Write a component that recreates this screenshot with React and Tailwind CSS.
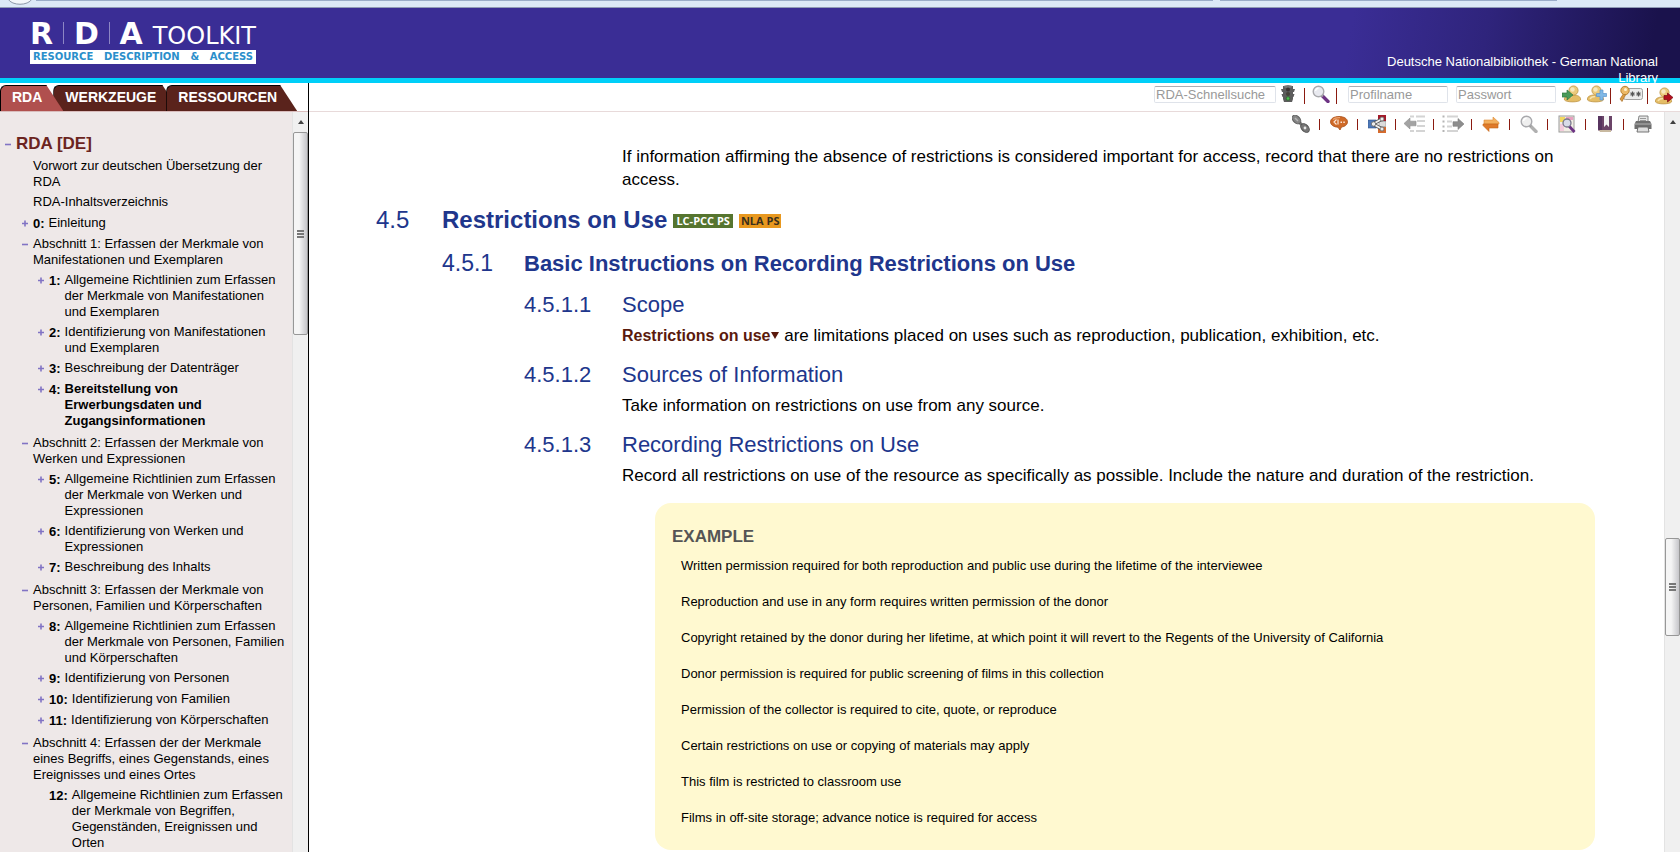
import { useState } from 'react';
import { clsx } from 'clsx';

const tabs = ['RDA', 'WERKZEUGE', 'RESSOURCEN'];

const tree = [
  { label: 'Vorwort zur deutschen Übersetzung der RDA' },
  { label: 'RDA-Inhaltsverzeichnis' },
  { number: '0:', label: 'Einleitung', sign: '+' },
  {
    label: 'Abschnitt 1: Erfassen der Merkmale von Manifestationen und Exemplaren',
    sign: '-',
    chapters: [
      { number: '1:', label: 'Allgemeine Richtlinien zum Erfassen der Merkmale von Manifestationen und Exemplaren', sign: '+' },
      { number: '2:', label: 'Identifizierung von Manifestationen und Exemplaren', sign: '+' },
      { number: '3:', label: 'Beschreibung der Datenträger', sign: '+' },
      { number: '4:', label: 'Bereitstellung von Erwerbungsdaten und Zugangsinformationen', sign: '+', active: true },
    ],
  },
  {
    label: 'Abschnitt 2: Erfassen der Merkmale von Werken und Expressionen',
    sign: '-',
    chapters: [
      { number: '5:', label: 'Allgemeine Richtlinien zum Erfassen der Merkmale von Werken und Expressionen', sign: '+' },
      { number: '6:', label: 'Identifizierung von Werken und Expressionen', sign: '+' },
      { number: '7:', label: 'Beschreibung des Inhalts', sign: '+' },
    ],
  },
  {
    label: 'Abschnitt 3: Erfassen der Merkmale von Personen, Familien und Körperschaften',
    sign: '-',
    chapters: [
      { number: '8:', label: 'Allgemeine Richtlinien zum Erfassen der Merkmale von Personen, Familien und Körperschaften', sign: '+' },
      { number: '9:', label: 'Identifizierung von Personen', sign: '+' },
      { number: '10:', label: 'Identifizierung von Familien', sign: '+' },
      { number: '11:', label: 'Identifizierung von Körperschaften', sign: '+' },
    ],
  },
  {
    label: 'Abschnitt 4: Erfassen der der Merkmale eines Begriffs, eines Gegenstands, eines Ereignisses und eines Ortes',
    sign: '-',
    chapters: [
      { number: '12:', label: 'Allgemeine Richtlinien zum Erfassen der Merkmale von Begriffen, Gegenständen, Ereignissen und Orten' },
    ],
  },
];

const examples = [
  'Written permission required for both reproduction and public use during the lifetime of the interviewee',
  'Reproduction and use in any form requires written permission of the donor',
  'Copyright retained by the donor during her lifetime, at which point it will revert to the Regents of the University of California',
  'Donor permission is required for public screening of films in this collection',
  'Permission of the collector is required to cite, quote, or reproduce',
  'Certain restrictions on use or copying of materials may apply',
  'This film is restricted to classroom use',
  'Films in off-site storage; advance notice is required for access',
];

/* Icons */

const Svg = ({ w = 18, h = 18, children }) => (
  <svg width={w} height={h} viewBox={`0 0 ${w} ${h}`} className="block shrink-0" aria-hidden="true">
    {children}
  </svg>
);

const TrafficLightIcon = () => (
  <Svg w={14}>
    <path d="M2 1h10v3h2l-1 3h-1v2h1.500l-1 3h-.5v2l-1 3H3l-1-3v-2h-.5l-1-3H2V7H1L0 4h2z" fill="#5d5d5d" />
    <ellipse cx="7" cy="1.500" rx="4" ry="1.500" fill="#777" />
    <circle cx="7" cy="4.500" r="2" fill="#3c3434" />
    <circle cx="7" cy="9" r="2" fill="#45423a" />
    <circle cx="7" cy="13.500" r="2.300" fill="#3a6b3a" />
    <circle cx="7" cy="13.500" r="1.300" fill="#46c04a" />
  </Svg>
);

const MagnifierIcon = ({ handle = '#6d3384', lens = '#e9eaf0' }) => (
  <Svg>
    <path d="M9.500 10l6.500 6.500" stroke={handle} strokeWidth="3.400" strokeLinecap="round" />
    <path d="M9 9.500l2 2" stroke="#999" strokeWidth="2" />
    <circle cx="6.500" cy="6.500" r="5.300" fill={lens} stroke="#a9a9ad" strokeWidth="1.400" />
    <path d="M3.500 6a3.200 3.200 0 0 1 3-2.700" stroke="#fff" strokeWidth="1.500" fill="none" />
  </Svg>
);

const Person = () => (
  <>
    <path d="M2.500 15c-.8-3 2-4.500 5.500-5h5c4 .5 6 2.500 5.500 5-2 2.500-14 2.500-16 0z" fill="#e4bd66" stroke="#bf9648" strokeWidth=".8" />
    <path d="M5 14c1-2 3-2.500 5-2.500" stroke="#f8e4ae" strokeWidth="1.500" fill="none" />
    <circle cx="11.500" cy="5.500" r="4.600" fill="#ebca7c" stroke="#bf9648" strokeWidth=".8" />
    <circle cx="10.500" cy="4.500" r="2.200" fill="#f8e8bd" />
  </>
);

const LoginIcon = () => (
  <Svg w={20}>
    <Person />
    <path d="M0 8h5V5l6 5-6 5v-3H0z" fill="#4a9a5a" stroke="#2f7a3e" strokeWidth=".7" />
  </Svg>
);

const AddProfileIcon = () => (
  <Svg w={20}>
    <g transform="translate(-2 0)"><Person /></g>
    <path d="M13 5h3v3.500h3.500v3H16V15h-3v-3.500H9.500v-3H13z" fill="#7fb8e6" stroke="#5b96cf" strokeWidth=".7" />
  </Svg>
);

const LogoutIcon = () => (
  <Svg>
    <g transform="translate(-2 0)"><Person /></g>
    <path d="M9 8.500h3.500V6L18 10.500 12.500 15v-2.500H9z" fill="#b3101f" stroke="#7b0712" strokeWidth=".7" />
  </Svg>
);

const PasswordIcon = () => (
  <Svg w={26}>
    <rect x="5.500" y="3.500" width="19" height="11" rx="2" fill="#ececec" stroke="#a2a2a2" />
    <path d="M14.500 6.500v5M12.500 7.800l4 2.400M16.500 7.800l-4 2.400M20.500 6.500v5M18.500 7.800l4 2.400M22.500 7.800l-4 2.400" stroke="#555" strokeWidth="1.200" />
    <path d="M6 8l-4 6 2 2.500 4-7.500z" fill="#dc9c43" stroke="#a86c22" strokeWidth=".7" />
    <circle cx="7" cy="5.500" r="4.200" fill="#ecb866" stroke="#b17929" strokeWidth=".9" />
    <circle cx="7.500" cy="4.500" r="1.500" fill="#fff2cf" />
  </Svg>
);

const LinkIcon = () => (
  <Svg>
    <path d="M5 5l8 8" stroke="#777" strokeWidth="3" />
    <ellipse cx="4.500" cy="4.500" rx="5" ry="3.400" transform="rotate(45 4.500 4.500)" fill="#858585" stroke="#5f5f5f" />
    <ellipse cx="13" cy="13" rx="5" ry="3.400" transform="rotate(45 13 13)" fill="#777" stroke="#555" />
    <path d="M3 3l3 3" stroke="#b5b5b5" strokeWidth="1.500" />
    <circle cx="13" cy="13" r="1.400" fill="#e8e8e8" />
  </Svg>
);

const CommentIcon = () => (
  <Svg>
    <path d="M9 1.500c5 0 8.500 2.200 8.500 5.300 0 3-2.700 4.800-6 5.200L10 15l-2-2.800C3.500 12 .5 9.800.5 6.800.5 3.700 4 1.500 9 1.500z" fill="#cf6a28" stroke="#a84b14" strokeWidth=".8" />
    <path d="M3 4.500C4.500 3 7 2.500 10 2.700" stroke="#eba36e" strokeWidth="1.200" fill="none" />
    <path d="M6.500 4.500L4 7l2.500 2.500M8 4.500v5" stroke="#fbe6d8" strokeWidth="1.200" fill="none" />
    <path d="M10.500 6.500h1.500v1.500h-1.500zM13.300 6.500h1.500v1.500h-1.500z" fill="#fbe6d8" />
  </Svg>
);

const TreeIcon = () => (
  <Svg>
    <rect x="0" y="5" width="8" height="8" fill="#4d78b8" stroke="#33558a" strokeWidth=".6" />
    <rect x="10" y="0" width="8" height="6" fill="#a31a2a" />
    <rect x="11" y="6.500" width="7" height="5" fill="#dcdcdc" stroke="#888" strokeWidth=".6" />
    <rect x="10" y="12" width="8" height="6" fill="#d56b2e" />
    <path d="M5 9l9-5M5 9l9 5" stroke="#555" strokeWidth="3.400" />
    <path d="M5 9l9-5M5 9l9 5" stroke="#f2f2f2" strokeWidth="2" />
    <circle cx="14" cy="4" r="2" fill="#eee" stroke="#666" strokeWidth=".8" />
    <circle cx="14" cy="14" r="2" fill="#eee" stroke="#666" strokeWidth=".8" />
    <circle cx="5.500" cy="9" r="2.200" fill="#eee" stroke="#666" strokeWidth=".8" />
  </Svg>
);

const OutdentIcon = () => (
  <Svg w={22}>
    <path d="M6 1.500h4M12 1.500h9M13 6h8M13 11h8M6 16h4M12 16h9" stroke="#d4d4d4" strokeWidth="2" />
    <path d="M0 8.500L6 3v3.200h6v4.600H6V14z" fill="#a3a3a3" stroke="#8f8f8f" strokeWidth=".6" />
  </Svg>
);

const IndentIcon = () => (
  <Svg w={22}>
    <path d="M5 1.500h11M5 6.500h5M5 11.500h5M5 16h11" stroke="#d4d4d4" strokeWidth="2" />
    <path d="M.5 1.500h2M.5 6.500h2M.5 11.500h2M.5 16h2" stroke="#b5b5b5" strokeWidth="2" />
    <path d="M22 9l-6-5.500v3.200h-5v4.600h5v3.200z" fill="#8d8d8d" stroke="#7d7d7d" strokeWidth=".6" />
  </Svg>
);

const SyncIcon = () => (
  <Svg>
    <path d="M2 5h9V2l6 5.500V9H2z" fill="#f2b05f" stroke="#dd8a35" strokeWidth=".6" />
    <path d="M16 13H7v3.500L1 10.500V9h15z" fill="#df7a2a" stroke="#c4661a" strokeWidth=".6" />
  </Svg>
);

const FindInPageIcon = () => (
  <Svg>
    <rect x="1" y="1" width="15" height="16" fill="#f1ede4" stroke="#9a9a9a" />
    <path d="M2 2h5v5H2z" fill="#f2d860" />
    <path d="M8 2h7v3H8z" fill="#e9a0c0" />
    <path d="M2 9h4v7H2z" fill="#f3cbdb" />
    <path d="M11 11l5.500 6" stroke="#6d3384" strokeWidth="2.800" />
    <circle cx="9" cy="8" r="4" fill="#d8dbe8" stroke="#77778a" strokeWidth="1.300" />
  </Svg>
);

const BookIcon = () => (
  <Svg w={16}>
    <path d="M1 1h14v14l-1 1H2l-1-1z" fill="#6b4468" />
    <path d="M1 1h4v14H2l-1-1z" fill="#57345f" />
    <path d="M2 15h12v2H3z" fill="#c8b9a0" />
    <path d="M7 1h5v11l-2.500-2.500L7 12z" fill="#f4f4f4" />
  </Svg>
);

const PrinterIcon = () => (
  <Svg>
    <path d="M5 1h9v6H4z" fill="#e6e6e6" stroke="#777" strokeWidth=".9" />
    <path d="M6 3.500h6M6 5.500h6" stroke="#999" />
    <path d="M2 6h14l1.500 3v5h-17V9z" fill="#6f6f6f" />
    <path d="M1 9h16" stroke="#b5b5b5" />
    <path d="M4 12h10l1 5H3z" fill="#dedede" stroke="#666" strokeWidth=".9" />
  </Svg>
);

const pageTools = [
  { name: 'Link', Icon: LinkIcon },
  { name: 'Kommentar', Icon: CommentIcon },
  { name: 'Baumansicht', Icon: TreeIcon },
  { name: 'Zurück', Icon: OutdentIcon },
  { name: 'Vor', Icon: IndentIcon },
  { name: 'Synchronisieren', Icon: SyncIcon },
  { name: 'Suchen', Icon: () => <MagnifierIcon handle="#b0b0b0" lens="#efefef" /> },
  { name: 'Im Dokument suchen', Icon: FindInPageIcon },
  { name: 'Lesezeichen', Icon: BookIcon },
  { name: 'Drucken', Icon: PrinterIcon },
];

const IconButton = ({ label, className, children }) => (
  <button type="button" aria-label={label} className={clsx('shrink-0 cursor-pointer', className)}>
    {children}
  </button>
);

const Divider = ({ className }) => <span className={clsx('w-px shrink-0 bg-[#8b1a10]', className)} />;

/* Scrollbar drawn beside a pane; before, thumb and after are flex shares of the track */
const Scrollbar = ({ before, thumb, after }) => (
  <div className="flex w-4 shrink-0 flex-col border-l border-[#e3e3e3] bg-[#f0f0f0]" aria-hidden="true">
    <div className="flex h-5 items-center justify-center">
      <span className="border-x-[3px] border-b-4 border-x-transparent border-b-[#404040]" />
    </div>
    <div className={before} />
    <div className={clsx('flex basis-0 flex-col items-center justify-center gap-px rounded-xs border border-[#979797] bg-linear-to-r from-[#f5f5f5] from-40% to-[#c6c6ca]', thumb)}>
      <span className="h-0.5 w-[7px] bg-[#777]" />
      <span className="h-0.5 w-[7px] bg-[#777]" />
      <span className="h-0.5 w-[7px] bg-[#777]" />
    </div>
    <div className={after} />
  </div>
);

const BrowserEdge = () => (
  <div className="flex h-2 shrink-0 items-start border-b border-[#8f9bb5] bg-[#dce9f7]">
    <svg width="32" height="6" viewBox="0 0 32 6" className="ml-1 shrink-0" aria-hidden="true">
      <path d="M4 -1C8 6 24 6 28 -1" fill="#f3f7fb" stroke="#8c97a8" />
    </svg>
    <span className="h-px grow-[1178] bg-[#9aacc8]" />
    <span className="w-[7px]" />
    <span className="h-px grow-[338] bg-[#9aacc8]" />
    <span className="grow-[123]" />
  </div>
);

const Logo = () => (
  <div className="ml-[30px] mt-[13px] w-[226px] font-['DejaVu_Sans',sans-serif] text-white">
    <div className="flex h-[26px] items-baseline justify-between leading-[26px]">
      <span className="text-[30px] font-bold">R</span>
      <span className="h-[22px] w-px bg-[#8d86c4]" />
      <span className="text-[30px] font-bold">D</span>
      <span className="h-[22px] w-px bg-[#8d86c4]" />
      <span className="text-[30px] font-bold">A</span>
      <span className="text-[24px]">TOOLKIT</span>
    </div>
    <div className="mt-[3px] flex h-[14px] justify-between bg-white px-[3px] text-[10px] leading-[14px] font-bold text-[#2a8fcb]">
      <span>RESOURCE</span>
      <span>DESCRIPTION</span>
      <span>&amp;</span>
      <span>ACCESS</span>
    </div>
  </div>
);

const Header = () => (
  <header className="flex h-[75px] shrink-0 justify-between bg-[linear-gradient(100deg,#3a2d95_80%,#2f247c_88%,#1a124c_98%)] shadow-[inset_0_-5px_0_#00cff8]">
    <Logo />
    <p className="mt-[46px] mr-[22px] w-[284px] shrink-0 text-right text-[13px] leading-4 text-white">
      Deutsche Nationalbibliothek - German National Library
    </p>
  </header>
);

const TabBar = ({ active, onSelect }) => (
  <nav className="flex h-[29px] shrink-0 items-end border-b border-[#d9bcbc]">
    {tabs.map((tab, index) => (
      <button
        key={tab}
        type="button"
        onClick={() => onSelect(tab)}
        className={clsx(
          'h-[26px] cursor-pointer rounded-tl-md border-t border-l border-black pb-[3px] pl-[11px] text-left text-[14px] leading-5 font-bold text-white [clip-path:polygon(0_0,calc(100%-17px)_0,100%_100%,0_100%)]',
          index === 0 && 'pr-[21px]',
          index === 1 && '-ml-[10px] pr-[23px]',
          index === 2 && '-ml-[13px] pr-5',
          tab === active ? 'z-10 bg-[#b0504e]' : 'bg-[#5a231c]',
        )}
      >
        {tab}
      </button>
    ))}
  </nav>
);

const Sign = ({ sign }) => (
  <span className="flex h-4 w-[11px] shrink-0 items-center" aria-hidden="true">
    {sign && (
      <svg width="7" height="7" viewBox="0 0 7 7">
        <path d={sign === '+' ? 'M0 3.500h6M3 .5v6' : 'M0 3.500h6'} stroke="#8173c4" strokeWidth="1.600" />
      </svg>
    )}
  </span>
);

const TreeRow = ({ item }) => (
  <a href="#" className={clsx('flex min-h-[17px] items-start', item.active && 'font-bold')}>
    <Sign sign={item.sign} />
    {item.number && <span className="mt-px mr-1 shrink-0 font-bold">{item.number}</span>}
    <span>{item.label}</span>
  </a>
);

const Sidebar = () => {
  const [activeTab, setActiveTab] = useState('RDA');

  return (
    <aside className="flex w-[309px] shrink-0 flex-col border-r border-black">
      <TabBar active={activeTab} onSelect={setActiveTab} />
      <div className="flex min-h-0 grow bg-[#eee8e8]">
        <div className="min-w-0 grow overflow-hidden pt-[22px] pr-[6px] pl-[5px] text-[13px] leading-4">
          <h2 className="flex items-center text-[17px] leading-5 font-bold text-[#6b2420]">
            <Sign sign="-" />
            RDA [DE]
          </h2>
          <ul className="mt-1 flex flex-col gap-1 pl-[17px]">
            {tree.map((item) => (
              <li key={item.label}>
                <TreeRow item={item} />
                {item.chapters && (
                  <ul className="mt-1 flex flex-col gap-1 pb-0.5 pl-4">
                    {item.chapters.map((chapter) => (
                      <li key={chapter.number}>
                        <TreeRow item={chapter} />
                      </li>
                    ))}
                  </ul>
                )}
              </li>
            ))}
          </ul>
        </div>
        <Scrollbar before="h-0" thumb="grow-[202]" after="grow-[518]" />
      </div>
    </aside>
  );
};

const Field = ({ label, type = 'text', className }) => (
  <input
    type={type}
    aria-label={label}
    placeholder={label}
    className={clsx('mt-px h-[17px] shrink-0 rounded-xs border border-[#dfe3ea] border-t-[#abadb3] bg-white px-px text-[13px] leading-4 placeholder:text-[#999]', className)}
  />
);

const SearchBar = () => (
  <form className="flex h-[29px] shrink-0 items-start justify-end border-b border-[#e8dada] pt-0.5 pr-[7px]">
    <Field label="RDA-Schnellsuche" className="w-[122px]" />
    <IconButton label="Suchfilter" className="ml-[5px]"><TrafficLightIcon /></IconButton>
    <Divider className="mt-[3px] ml-[9px] h-4" />
    <IconButton label="Erweiterte Suche" className="ml-[7px]"><MagnifierIcon /></IconButton>
    <Divider className="mt-[3px] ml-[6px] h-4" />
    <Field label="Profilname" className="ml-[11px] w-[100px]" />
    <Field label="Passwort" type="password" className="ml-2 w-[100px]" />
    <IconButton label="Anmelden" className="ml-[6px]"><LoginIcon /></IconButton>
    <IconButton label="Profil anlegen" className="ml-[5px]"><AddProfileIcon /></IconButton>
    <Divider className="mt-[3px] ml-[3px] h-4" />
    <IconButton label="Passwort vergessen" className="ml-[7px]"><PasswordIcon /></IconButton>
    <Divider className="mt-[3px] ml-[3px] h-4" />
    <IconButton label="Abmelden" className="mt-0.5 ml-[7px]"><LogoutIcon /></IconButton>
  </form>
);

const PageTools = () => (
  <div className="flex h-6 shrink-0 items-center justify-end pr-[3px]">
    {pageTools.map(({ name, Icon }, index) => (
      <div key={name} className="flex w-[38px] items-center">
        <Divider className={clsx('h-[11px]', index === 0 && 'invisible')} />
        <IconButton label={name} className="flex grow justify-center"><Icon /></IconButton>
      </div>
    ))}
  </div>
);

const Entry = ({ number, title, children }) => (
  <section className="pl-[148px]">
    <h4 className="flex text-[22px] leading-7">
      <span className="w-[98px] shrink-0">{number}</span>
      {title}
    </h4>
    <p className="mt-[5px] mb-[14px] pl-[98px] leading-[23px] text-black">{children}</p>
  </section>
);

const Article = () => (
  <article className="min-h-0 grow overflow-hidden pr-[69px] pl-[67px] text-[17px] text-[#20368c]">
    <p className="mt-[9px] pr-3 pl-[246px] leading-[23px] text-black">
      If information affirming the absence of restrictions is considered important for access, record that there are no restrictions on access.
    </p>
    <h2 className="mt-[13px] flex items-center text-[24px] leading-8">
      <span className="w-[66px] shrink-0">4.5</span>
      <span className="font-bold">Restrictions on Use</span>
      <a href="#" className="mt-0.5 ml-[6px] h-[14px] bg-[#56752f] px-[3px] font-['Open_Sans',sans-serif] text-[11px] leading-[14px] font-bold text-white">LC-PCC PS</a>
      <a href="#" className="mt-0.5 ml-[6px] h-[14px] bg-[#e8981f] px-0.5 font-['Open_Sans',sans-serif] text-[11px] leading-[14px] font-bold text-[#3a2f1c]">NLA PS</a>
    </h2>
    <h3 className="my-[11px] flex items-baseline pl-[66px] text-[23px] leading-8">
      <span className="w-[82px] shrink-0">4.5.1</span>
      <span className="text-[22px] font-bold">Basic Instructions on Recording Restrictions on Use</span>
    </h3>
    <Entry number="4.5.1.1" title="Scope">
      <a href="#" className="text-[16px] font-bold text-[#5a1a0c]">
        Restrictions on use
        <svg width="8" height="7" viewBox="0 0 8 7" className="mb-[3px] ml-px inline" aria-hidden="true">
          <path d="M0 0h8L4 7z" fill="currentColor" />
        </svg>
      </a>
      {' '}are limitations placed on uses such as reproduction, publication, exhibition, etc.
    </Entry>
    <Entry number="4.5.1.2" title="Sources of Information">
      Take information on restrictions on use from any source.
    </Entry>
    <Entry number="4.5.1.3" title="Recording Restrictions on Use">
      Record all restrictions on use of the resource as specifically as possible. Include the nature and duration of the restriction.
    </Entry>
    <div className="mt-4 ml-[279px] rounded-[16px] bg-[#fff9d0] px-[17px] pt-6 pb-[14px]">
      <h5 className="text-[17px] leading-5 font-bold text-[#555]">EXAMPLE</h5>
      <ul className="mt-px pl-[9px] text-[13px] leading-9 text-black">
        {examples.map((example) => (
          <li key={example}>{example}</li>
        ))}
      </ul>
    </div>
  </article>
);

export default function App() {
  return (
    <div className="flex h-screen flex-col overflow-hidden bg-white font-['Liberation_Sans',Arial,sans-serif] text-black">
      <BrowserEdge />
      <Header />
      <div className="flex min-h-0 grow">
        <Sidebar />
        <main className="flex min-w-0 grow flex-col">
          <SearchBar />
          <div className="flex min-h-0 grow">
            <div className="flex min-w-0 grow flex-col">
              <PageTools />
              <Article />
            </div>
            <Scrollbar before="grow-[407]" thumb="grow-[96]" after="grow-[216]" />
          </div>
        </main>
      </div>
    </div>
  );
}
